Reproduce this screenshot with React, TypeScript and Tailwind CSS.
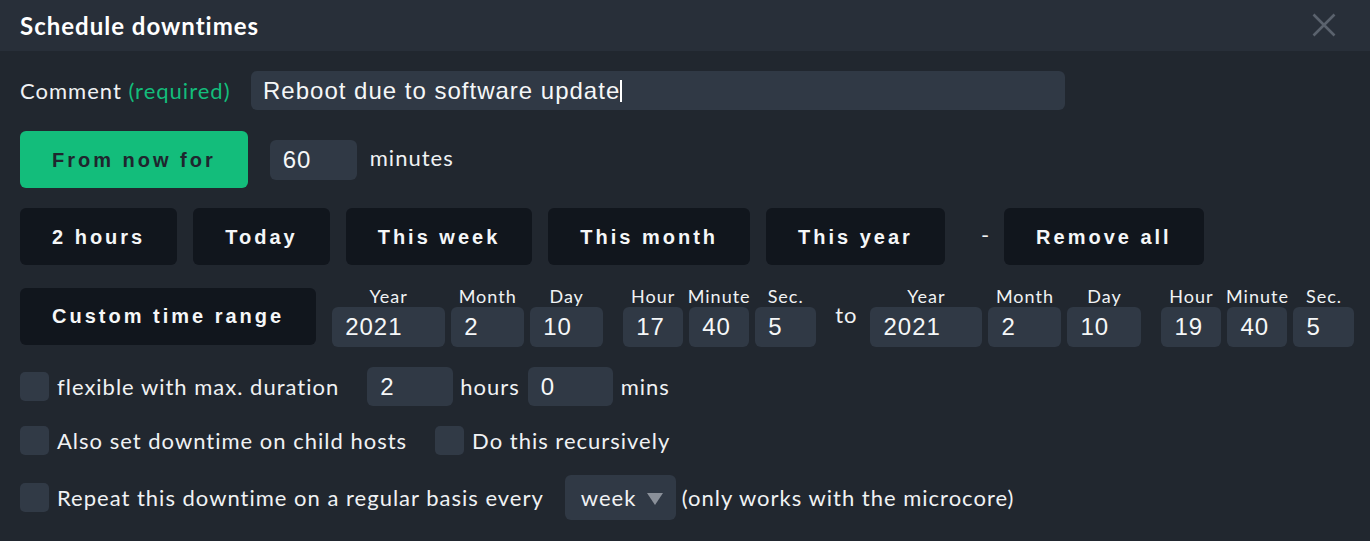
import React from 'react';

const lato = "font-['Lato','Noto_Sans',sans-serif]";
const arial = "font-['Liberation_Sans','Arial',sans-serif]";

function DarkButton({ label, className = '' }: { label: string; className?: string }) {
  return (
    <button
      className={`h-[57px] px-8 rounded-md bg-[#11161d] text-[#f5f7f8] text-[20px] font-bold tracking-[3px] whitespace-nowrap ${arial} ${className}`}
    >
      {label}
    </button>
  );
}

function NumBox({ value, w, h = 'h-[40px]' }: { value: string; w: string; h?: string }) {
  return (
    <div
      className={`${w} ${h} rounded-md bg-[#303945] flex items-center pl-[13px] text-[24px] tracking-[1px] text-[#f5f7f8] ${arial}`}
    >
      {value}
    </div>
  );
}

function Checkbox() {
  return <div className="w-[29px] h-[29px] rounded-[5px] bg-[#313a46] shrink-0" />;
}

type Field = { label: string; value: string; w: string; gap?: boolean };

function DateGroup({ fields }: { fields: Field[] }) {
  return (
    <div className="flex">
      {fields.map((f, i) => (
        <div
          key={i}
          className={`${f.w} shrink-0 flex flex-col items-center ${i > 0 ? (f.gap ? 'ml-5' : 'ml-1.5') : ''}`}
        >
          <span className="text-[18px] leading-[22px] tracking-[1px] whitespace-nowrap text-[#f0f2f4]">{f.label}</span>
          <NumBox value={f.value} w="w-full" />
        </div>
      ))}
    </div>
  );
}

export default function App() {
  const from: Field[] = [
    { label: 'Year', value: '2021', w: 'w-[113px]' },
    { label: 'Month', value: '2', w: 'w-[73px]' },
    { label: 'Day', value: '10', w: 'w-[73px]' },
    { label: 'Hour', value: '17', w: 'w-[60px]', gap: true },
    { label: 'Minute', value: '40', w: 'w-[60px]' },
    { label: 'Sec.', value: '5', w: 'w-[61px]' },
  ];
  const to: Field[] = [
    { label: 'Year', value: '2021', w: 'w-[112px]' },
    { label: 'Month', value: '2', w: 'w-[73px]' },
    { label: 'Day', value: '10', w: 'w-[74px]' },
    { label: 'Hour', value: '19', w: 'w-[60px]', gap: true },
    { label: 'Minute', value: '40', w: 'w-[60px]' },
    { label: 'Sec.', value: '5', w: 'w-[61px]' },
  ];

  return (
    <div className={`w-[1370px] h-[541px] bg-[#21272f] text-[#f0f2f4] overflow-hidden ${lato}`}>
      {/* header */}
      <div className="h-[51px] bg-[#282f39] flex items-center justify-between pl-5 pr-[34px]">
        <h1 className="text-[24px] font-bold tracking-[1px] text-white">Schedule downtimes</h1>
        <svg width="24" height="24" viewBox="0 0 24 24" className="mt-[-2px]">
          <path d="M1.5 1.5 L22.5 22.5 M22.5 1.5 L1.5 22.5" stroke="#5a626d" strokeWidth="2.6" />
        </svg>
      </div>

      <div className="px-5 text-[22px] tracking-[1px]">
        {/* comment */}
        <div className="flex items-center mt-5 h-[39px]">
          <span className="w-[231px] whitespace-nowrap">
            Comment <span className="text-[#13bd7b]">(required)</span>
          </span>
          <div className={`w-[814px] h-[39px] rounded-md bg-[#303945] flex items-center pl-3 text-[24px] text-[#f5f7f8] ${arial}`}>
            Reboot due to software update
            <span className="w-[2px] h-[22px] bg-white" />
          </div>
        </div>

        {/* from now for */}
        <div className="flex items-center mt-[21px]">
          <button className={`h-[57px] px-8 rounded-md bg-[#13bd7b] text-[#1f262e] text-[20px] font-bold tracking-[3px] ${arial}`}>
            From now for
          </button>
          <div className="ml-[22px]">
            <NumBox value="60" w="w-[87px]" />
          </div>
          <span className="ml-[13px] -mt-[4px]">minutes</span>
        </div>

        {/* quick buttons */}
        <div className="flex items-center gap-4 mt-5">
          <DarkButton label="2 hours" />
          <DarkButton label="Today" />
          <DarkButton label="This week" />
          <DarkButton label="This month" />
          <DarkButton label="This year" />
          <span className="ml-5 mr-[-2px] -mt-[4px]">-</span>
          <DarkButton label="Remove all" />
        </div>

        {/* custom range */}
        <div className="flex items-center mt-5">
          <DarkButton label="Custom time range" className="w-[297px] px-0" />
          <div className="ml-4">
            <DateGroup fields={from} />
          </div>
          <span className="ml-[19px] mr-[13px] -mt-[4px]">to</span>
          <DateGroup fields={to} />
        </div>

        {/* flexible */}
        <div className="flex items-center mt-5 h-[39px]">
          <Checkbox />
          <span className="ml-2">flexible with max. duration</span>
          <div className="ml-[28px]">
            <NumBox value="2" w="w-[86px]" h="h-[39px]" />
          </div>
          <span className="ml-[7px]">hours</span>
          <div className="ml-[8px]">
            <NumBox value="0" w="w-[85px]" h="h-[39px]" />
          </div>
          <span className="ml-[8px]">mins</span>
        </div>

        {/* child hosts */}
        <div className="flex items-center mt-5 h-[29px]">
          <Checkbox />
          <span className="ml-2">Also set downtime on child hosts</span>
          <div className="ml-[28px]">
            <Checkbox />
          </div>
          <span className="ml-2">Do this recursively</span>
        </div>

        {/* repeat */}
        <div className="flex items-center mt-5 h-[45px]">
          <Checkbox />
          <span className="ml-2">Repeat this downtime on a regular basis every</span>
          <div className="ml-[21px] w-[111px] h-[45px] rounded-md bg-[#303945] flex items-center pl-4 gap-[11px]">
            <span>week</span>
            <svg width="16" height="12" viewBox="0 0 16 12" className="mt-[3px]">
              <path d="M0 0 H16 L8 12 Z" fill="#8a9099" />
            </svg>
          </div>
          <span className="ml-[6px]">(only works with the microcore)</span>
        </div>
      </div>
    </div>
  );
}
